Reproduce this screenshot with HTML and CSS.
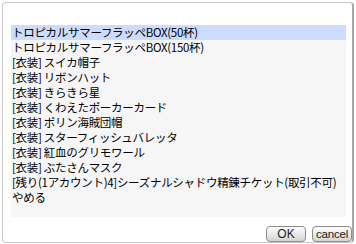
FILE: index.html
```html
<!DOCTYPE html>
<html lang="ja">
<head>
    <meta charset="UTF-8">
    <title>選択</title>
    <link rel="stylesheet" href="styles.css">
</head>
<body>
    <div class="dialog">
        <ul class="menu">
            <li class="item selected">トロピカルサマーフラッペBOX(50杯)</li>
            <li class="item">トロピカルサマーフラッペBOX(150杯)</li>
            <li class="item">[衣装] スイカ帽子</li>
            <li class="item">[衣装] リボンハット</li>
            <li class="item">[衣装] きらきら星</li>
            <li class="item">[衣装] くわえたポーカーカード</li>
            <li class="item">[衣装] ポリン海賊団帽</li>
            <li class="item">[衣装] スターフィッシュバレッタ</li>
            <li class="item">[衣装] 紅血のグリモワール</li>
            <li class="item">[衣装] ぶたさんマスク</li>
            <li class="item">[残り(1アカウント)4]シーズナルシャドウ精錬チケット(取引不可)</li>
            <li class="item">やめる</li>
        </ul>
        <div class="buttons">
            <button class="btn ok">OK</button>
            <button class="btn cancel">cancel</button>
        </div>
    </div>
</body>
</html>
```

FILE: styles.css
```css
body {
    margin: 0;
    background-color: #fff;
    font-family: "Noto Sans CJK JP", "Liberation Sans", sans-serif;
    font-size: 11.5px;
    color: #000;
}

.dialog {
    margin: 2px 0 0 2px;
    width: 352px;
    height: 241px;
    box-sizing: border-box;
    border: 1px solid #c8c8c8;
    border-right: 2px solid #a8a8a8;
    border-radius: 4px;
    padding: 22px 6px 0 8px;
    display: flex;
    flex-direction: column;
}

.menu {
    list-style: none;
    margin: 0;
    padding: 0;
    height: 192px;
    background-color: #f6f6f6;
}

.item {
    height: 15px;
    line-height: 15px;
    padding-left: 1px;
    letter-spacing: -0.3px;
    white-space: nowrap;
}

.selected {
    background-color: #cddcfc;
}

.buttons {
    display: flex;
    justify-content: flex-end;
    gap: 6px;
    margin: 9px -6px 0 0;
}

.btn {
    width: 40px;
    height: 16px;
    padding: 0;
    border: 1px solid #8c8c8c;
    border-radius: 4px;
    background: linear-gradient(#ffffff, #d4d4d4);
    font-family: "Liberation Sans", Arial, sans-serif;
    font-size: 12px;
    line-height: 14px;
    color: #222;
}

.cancel {
    font-size: 11.5px;
    letter-spacing: -0.2px;
}
```
